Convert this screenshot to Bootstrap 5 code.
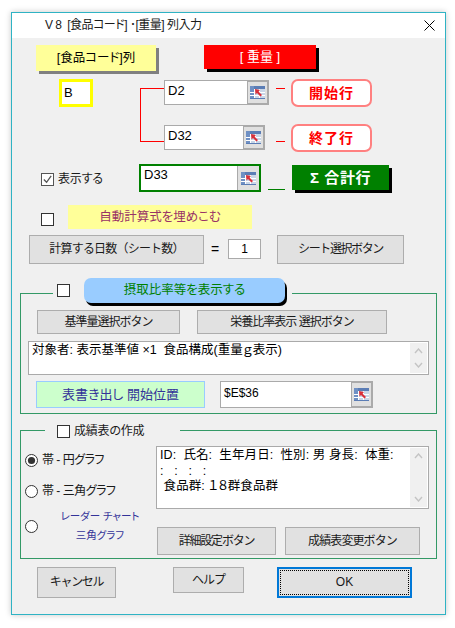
<!DOCTYPE html>
<html lang="ja">
<head>
<meta charset="utf-8">
<title>V8</title>
<link href="https://cdn.jsdelivr.net/npm/bootstrap@5.3.0/dist/css/bootstrap.min.css" rel="stylesheet">
<style>
html,body{margin:0;background:#fff;height:100%;overflow:hidden}
body{font-family:"Liberation Sans","Noto Sans CJK JP",sans-serif;font-size:12px;line-height:1.2;color:#000;font-feature-settings:"palt"}
.dlg{margin:12px 0 0 11px;width:435px;height:603px;border:1px solid #2fb3c4;background:#f0f0f0;box-shadow:0 0 6px rgba(0,0,0,.22)}
.ttl{height:25px;background:#fff;padding-left:33px;font-size:12px;letter-spacing:-.5px;color:#1a1a1a;white-space:pre}
.ttl svg{margin-right:10px}
.lbl-y{margin-left:24px;width:120px;height:26px;background:#ffff99;box-shadow:3px 3px 0 #808080;font-size:12.5px}
.lbl-r{margin-left:48px;width:112px;height:24px;background:#f00;color:#fff;box-shadow:3px 3px 0 #000;font-size:13px}
.ra{height:29px;margin-top:7px}
.rb{height:73px;margin-top:5px}
.inp-b{margin-left:47px;width:34px;height:28px;border:3px solid #ff0;background:#fff;padding:3px 0 0 2px;font-size:13px}
.conn{margin:9px 0 0 47px;width:24px;height:54px;border:1px solid #f00;border-right:0}
.cref{width:105px}
.ref{background:#fff;border:1px solid #aaa;height:25px;font-size:13px}
.ref-txt{padding:2px 0 0 3px;min-width:0}
.ref-btn{width:22px;background:#e0e0e0;border:2px solid #aaa;border-width:2px 2px 2px 1px;margin:-1px -1px -1px 0}
.r1{margin-top:1px;width:105px}
.r2{margin-top:20px;width:101px}
.dash{width:9px;height:1px;background:#f00;margin:9px 6px 0 7px}
.dash2{margin-top:17px}
.pill{width:81px;height:28px;border:2px solid #ff8080;border-radius:7px;background:#fff;color:#f00;font-weight:700;font-size:14px;letter-spacing:1px}
.p2{margin-top:17px}
.rd{height:28px;margin-top:12px}
.cell1{width:127px;padding-left:29px;padding-top:8px}
.chk.form-check-input{width:13px;height:13px;margin:0;border:1px solid #333;border-radius:0;background-color:#fff;flex:none;box-shadow:none}
.chk.form-check-input:checked{background-color:#fff;border-color:#555;background-size:11px;background-image:url("data:image/svg+xml,%3Csvg xmlns='http://www.w3.org/2000/svg' viewBox='0 0 12 12'%3E%3Cpath d='M2 6l3 3 5-7' fill='none' stroke='%23555' stroke-width='1.4'/%3E%3C/svg%3E")}
.cklbl{margin-left:4px;color:#1a1a1a;letter-spacing:-.2px}
.ref.r3{width:122px;height:28px;border:2px solid #008000}
.r3 .ref-btn{border:0;border-left:1px solid #aaa;background:#e0e0e0;margin:0}
.r3 .ref-txt{padding-top:1px}
.glin{width:17px;height:1px;background:#008000;margin:25px 0 0 7px}
.lbl-g{width:97px;height:25px;background:#008000;color:#fff;box-shadow:3px 3px 0 #000;margin:1px 0 0 7px;font-weight:700;font-size:15px;letter-spacing:.6px}
.re{height:24px;margin-top:13px}
.chk.form-check-input.ce{margin:8px 0 0 29px}
.lbl-a{margin-left:14px;width:184px;height:24px;background:#ffff99;color:#993366;font-size:12.5px}
.rf{height:29px;margin-top:6px}
.wbtn.btn{background:#e1e1e1;border:1px solid #adadad;border-radius:0;padding:0;font-size:12px;line-height:1.2;color:#1a1a1a;display:flex;align-items:center;justify-content:center;flex:none;white-space:nowrap}
.wbtn.bn1{margin-left:17px;width:175px;height:29px;letter-spacing:-.8px}
.eq{width:8px;margin:0 9px 0 7px;font-size:14px}
.inp-1{width:33px;height:20px;margin-top:4px;background:#fff;border:1px solid #aaa}
.wbtn.bn2{margin-left:16px;width:127px;height:29px;letter-spacing:-1.4px}
.grp{position:relative;margin-left:8px;width:417px;border:1px solid #339966}
.g1{margin-top:29px;height:121px;padding-top:16px}
.g2{margin-top:16px;height:129px;padding-top:15px}
.lgd{position:absolute;background:#f0f0f0;display:flex;align-items:center}
.lgd1{left:32px;top:-16px;width:239px;height:25px;padding-left:4px}
.lgd2{left:24px;top:-8px;width:135px;height:16px;padding-left:12px}
.pblue{margin-left:14px;width:201px;height:25px;background:#99ccff;border-radius:7px;box-shadow:2px 3px 0 #000;color:#008000;font-size:12.5px}
.wbtn.bn3{margin-left:16px;width:143px;height:24px;letter-spacing:-1px}
.wbtn.bn4{margin-left:17px;width:190px;height:24px;letter-spacing:-1px}
.tbox{background:#fff;border:1px solid #aaa;overflow:hidden;font-size:12.5px;white-space:pre}
.tb1{margin:7px 0 0 7px;width:401px;height:34px;padding-left:3px}
.scr{width:17px;background:#f0f0f0;margin:1px;flex:none;padding:5px 0}
.tb-t{padding-top:1px;min-width:0}
.r5{margin:6px 0 0 15px;height:27px}
.lbl-gg{width:169px;height:27px;background:#ccffcc;border:1px solid #99ccff;color:#333399;font-size:13px}
.ref.r6{margin-left:15px;width:153px;height:27px}
.ref.r6 .ref-txt{font-size:12px;padding-top:4px}
.rcol{width:135px;flex:none}
.rdo.form-check-input{width:13px;height:13px;margin:0 0 0 4px;border:1px solid #333;background-color:#fff;flex:none;box-shadow:none}
.rdo.form-check-input:checked{background-color:#fff;background-size:9px;background-position:center;background-image:url("data:image/svg+xml,%3Csvg xmlns='http://www.w3.org/2000/svg' viewBox='0 0 10 10'%3E%3Ccircle cx='5' cy='5' r='4' fill='%23333'/%3E%3C/svg%3E")}
.ro1{margin-top:8px;height:13px}
.ro2{margin-top:18px;height:13px}
.ro3{margin-top:12px;height:32px}
.rlb{margin-left:4px;font-size:12px;color:#1a1a1a;white-space:nowrap;letter-spacing:-.5px}
.rlb2{margin-left:20px;width:84px;font-size:10.5px;line-height:19px;color:#333399;text-align:center;white-space:nowrap}
.tb2{width:273px;height:63px;padding-left:3px;line-height:15.5px;letter-spacing:.1px}
.bnr{margin-top:18px}
.wbtn.bn5{margin-left:1px;width:119px;height:28px;letter-spacing:-1.2px}
.wbtn.bn6{margin-left:9px;width:135px;height:28px;letter-spacing:-.9px}
.rz{margin-top:8px}
.wbtn.bn7{margin-left:25px;width:79px;height:31px;letter-spacing:-1.3px}
.wbtn.bn8{margin-left:57px;width:71px;height:26px;letter-spacing:-1px}
.wbtn.bn9{margin-left:33px;width:135px;height:31px;border:2px solid #0078d7;position:relative}
.bn9 i{position:absolute;inset:1px;border:1px dotted #000}
</style>
</head>
<body>
<svg width="0" height="0" class="d-block">
  <symbol id="re" viewBox="0 0 15 13">
    <rect x="0" y="0" width="15" height="13" fill="#c9d6e8"/>
    <rect x="0" y="0" width="15" height="3" fill="#5b7db5"/>
    <rect x="0" y="0" width="4" height="13" fill="#6f90c4"/>
    <path d="M0 6.500h15M0 9.500h15M4.500 3v10M9.500 3v10" stroke="#fff" stroke-width="1"/>
    <path d="M0 12.500h15" stroke="#5b7db5"/>
    <path d="M5 3l5 1-1.500 1.500L12 9l-1.500 1.500L7 7 5.500 8.500z" fill="#d9303a"/>
  </symbol>
</svg>
<div class="dlg">
  <div class="ttl d-flex align-items-center justify-content-between"><span>V 8  [食品コード] ･[重量] 列入力</span>
    <svg width="11" height="11" viewBox="0 0 11 11"><path d="M.5.5l10 10M10.5.5l-10 10" stroke="#000" stroke-width="1"/></svg>
  </div>

  <div class="ra d-flex align-items-start">
    <div class="lbl-y d-flex align-items-center justify-content-center">[食品コード]列</div>
    <div class="lbl-r d-flex align-items-center justify-content-center">[ 重量 ]</div>
  </div>

  <div class="rb d-flex align-items-start">
    <div class="inp-b">B</div>
    <div class="conn"></div>
    <div class="cref d-flex flex-column">
      <div class="ref r1 d-flex justify-content-between"><div class="ref-txt">D2</div><div class="ref-btn d-flex align-items-center justify-content-center"><svg width="15" height="13"><use href="#re"/></svg></div></div>
      <div class="ref r2 d-flex justify-content-between"><div class="ref-txt">D32</div><div class="ref-btn d-flex align-items-center justify-content-center"><svg width="15" height="13"><use href="#re"/></svg></div></div>
    </div>
    <div class="d-flex flex-column">
      <div class="d-flex align-items-start"><div class="dash"></div><div class="pill d-flex align-items-center justify-content-center">開始行</div></div>
      <div class="d-flex align-items-start p2"><div class="dash dash2"></div><div class="pill d-flex align-items-center justify-content-center">終了行</div></div>
    </div>
  </div>

  <div class="rd d-flex align-items-start">
    <div class="cell1 d-flex align-items-center"><input class="form-check-input chk" type="checkbox" checked aria-label="表示する"><span class="cklbl">表示する</span></div>
    <div class="ref r3 d-flex justify-content-between"><div class="ref-txt">D33</div><div class="ref-btn d-flex align-items-center justify-content-center"><svg width="15" height="13"><use href="#re"/></svg></div></div>
    <div class="glin"></div>
    <div class="lbl-g d-flex align-items-center justify-content-center">Σ 合計行</div>
  </div>

  <div class="re d-flex align-items-start">
    <input class="form-check-input chk ce" type="checkbox" aria-label="自動計算式を埋めこむ">
    <div class="lbl-a d-flex align-items-center justify-content-center">自動計算式を埋めこむ</div>
  </div>

  <div class="rf d-flex align-items-center">
    <button type="button" class="btn wbtn bn1">計算する日数（シート数）</button>
    <div class="eq">=</div>
    <div class="inp-1 align-self-start d-flex align-items-center justify-content-center">1</div>
    <button type="button" class="btn wbtn bn2">シート選択ボタン</button>
  </div>

  <div class="grp g1">
    <div class="lgd lgd1">
      <input class="form-check-input chk" type="checkbox" aria-label="摂取比率等を表示する">
      <div class="pblue d-flex align-items-center justify-content-center">摂取比率等を表示する</div>
    </div>
    <div class="d-flex">
      <button type="button" class="btn wbtn bn3">基準量選択ボタン</button>
      <button type="button" class="btn wbtn bn4">栄養比率表示 選択ボタン</button>
    </div>
    <div class="tbox tb1 d-flex justify-content-between">
      <div class="tb-t">対象者: 表示基準値 ×1  食品構成(重量ｇ表示)</div>
      <div class="scr d-flex flex-column justify-content-between align-items-center">
        <svg width="9" height="6" viewBox="0 0 9 6"><path d="M1 5l3.500-4L8 5" fill="none" stroke="#c4c4c4" stroke-width="1.4"/></svg>
        <svg width="9" height="6" viewBox="0 0 9 6"><path d="M1 1l3.500 4L8 1" fill="none" stroke="#c4c4c4" stroke-width="1.4"/></svg>
      </div>
    </div>
    <div class="r5 d-flex">
      <div class="lbl-gg d-flex align-items-center justify-content-center">表書き出し 開始位置</div>
      <div class="ref r6 d-flex justify-content-between"><div class="ref-txt">$E$36</div><div class="ref-btn d-flex align-items-center justify-content-center"><svg width="15" height="13"><use href="#re"/></svg></div></div>
    </div>
  </div>

  <div class="grp g2 d-flex">
    <div class="lgd lgd2">
      <input class="form-check-input chk" type="checkbox" aria-label="成績表の作成"><span class="cklbl">成績表の作成</span>
    </div>
    <div class="rcol d-flex flex-column">
      <div class="ro1 d-flex align-items-center"><input class="form-check-input rdo" type="radio" name="g" checked aria-label="帯 - 円グラフ"><span class="rlb">帯 - 円グラフ</span></div>
      <div class="ro2 d-flex align-items-center"><input class="form-check-input rdo" type="radio" name="g" aria-label="帯 - 三角グラフ"><span class="rlb">帯 - 三角グラフ</span></div>
      <div class="ro3 d-flex align-items-center"><input class="form-check-input rdo" type="radio" name="g" aria-label="レーダーチャート 三角グラフ"><span class="rlb2">レーダー チャート<br>三角グラフ</span></div>
    </div>
    <div class="d-flex flex-column">
      <div class="tbox tb2 d-flex justify-content-between">
        <div class="tb-t">ID:  氏名:  生年月日:  性別: 男 身長:  体重:
:   :   :   :
 食品群: １８群食品群</div>
        <div class="scr d-flex flex-column justify-content-between align-items-center">
          <svg width="9" height="6" viewBox="0 0 9 6"><path d="M1 5l3.500-4L8 5" fill="none" stroke="#c4c4c4" stroke-width="1.4"/></svg>
          <svg width="9" height="6" viewBox="0 0 9 6"><path d="M1 1l3.500 4L8 1" fill="none" stroke="#c4c4c4" stroke-width="1.4"/></svg>
        </div>
      </div>
      <div class="bnr d-flex">
        <button type="button" class="btn wbtn bn5">詳細設定ボタン</button>
        <button type="button" class="btn wbtn bn6">成績表変更ボタン</button>
      </div>
    </div>
  </div>

  <div class="rz d-flex align-items-start">
    <button type="button" class="btn wbtn bn7">キャンセル</button>
    <button type="button" class="btn wbtn bn8">ヘルプ</button>
    <button type="button" class="btn wbtn bn9"><i></i>OK</button>
  </div>
</div>
</body>
</html>
